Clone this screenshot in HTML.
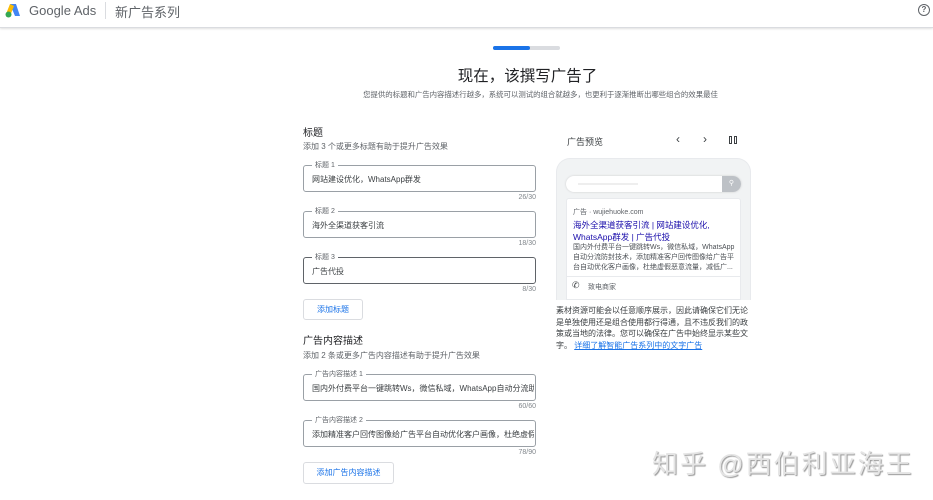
<!DOCTYPE html>
<html><head><meta charset="utf-8"><style>
*{margin:0;padding:0;box-sizing:border-box}
body{width:933px;height:500px;overflow:hidden;background:#fff;font-family:"Liberation Sans","Noto Sans CJK SC",sans-serif;color:#3c4043;position:relative}
.a{position:absolute;white-space:nowrap}
.f{position:absolute;left:303px;width:233px;height:27px;border:1px solid #9aa0a6;border-radius:3px}
.f span.l{position:absolute;top:-6px;left:8px;background:#fff;padding:0 3px;font-size:7px;color:#5f6368}
.f span.v{position:absolute;top:8px;left:8px;font-size:8px;color:#3c4043;white-space:nowrap;overflow:hidden;width:222px}
.c{position:absolute;font-size:7px;color:#80868b;right:397px}
.btn{position:absolute;left:303px;border:1px solid #dadce0;border-radius:3px;color:#1a73e8;font-size:8px;text-align:center}
</style></head><body>
<div class="a" style="left:0;top:0;width:933px;height:28px;border-bottom:1px solid #dadce0;box-shadow:0 1px 2px #e0e0e0"></div>
<svg class="a" style="left:5px;top:3px" width="16" height="15" viewBox="0 0 16 15"><path d="M5 1 L11 1 L15 13 L10 13Z" fill="#4285f4"/><path d="M5 1 L9 3 L5 13 L1 11Z" fill="#fbbc04"/><circle cx="3.5" cy="11.5" r="3" fill="#34a853"/></svg>
<div class="a" style="left:29px;top:3px;font-size:13px;color:#5f6368">Google Ads</div>
<div class="a" style="left:105px;top:2px;width:1px;height:17px;background:#dadce0"></div>
<div class="a" style="left:115px;top:2px;font-size:13px;color:#5f6368">新广告系列</div>
<div class="a" style="left:918px;top:4px;width:12px;height:12px;border:1.5px solid #5f6368;border-radius:50%;font-size:8px;text-align:center;line-height:9px;color:#5f6368;font-weight:bold">?</div>
<div class="a" style="left:493px;top:46px;width:67px;height:4px;background:#dadce0;border-radius:2px"></div>
<div class="a" style="left:493px;top:46px;width:37px;height:4px;background:#1a73e8;border-radius:2px"></div>
<div class="a" style="left:0;width:1055px;text-align:center;top:64px;font-size:15.5px;color:#202124">现在，该撰写广告了</div>
<div class="a" style="left:0;width:1081px;text-align:center;top:89px;font-size:7.4px;color:#5f6368">您提供的标题和广告内容描述行越多，系统可以测试的组合就越多，也更利于逐渐推断出哪些组合的效果最佳</div>
<div class="a" style="left:303px;top:124px;font-size:10px;color:#202124">标题</div>
<div class="a" style="left:303px;top:141px;font-size:8px;color:#5f6368">添加 3 个或更多标题有助于提升广告效果</div>
<div class="f" style="top:165px"><span class="l">标题 1</span><span class="v">网站建设优化，WhatsApp群发</span></div>
<div class="c" style="top:194px">26/30</div>
<div class="f" style="top:211px"><span class="l">标题 2</span><span class="v">海外全渠道获客引流</span></div>
<div class="c" style="top:240px">18/30</div>
<div class="f" style="top:257px;border-color:#5f6368"><span class="l">标题 3</span><span class="v">广告代投</span></div>
<div class="c" style="top:286px">8/30</div>
<div class="btn" style="top:299px;width:60px;height:21px;line-height:19px">添加标题</div>
<div class="a" style="left:303px;top:332px;font-size:10px;color:#202124">广告内容描述</div>
<div class="a" style="left:303px;top:350px;font-size:8px;color:#5f6368">添加 2 条或更多广告内容描述有助于提升广告效果</div>
<div class="f" style="top:374px"><span class="l">广告内容描述 1</span><span class="v">国内外付费平台一键跳转Ws，微信私域，WhatsApp自动分流助手</span></div>
<div class="c" style="top:403px">60/60</div>
<div class="f" style="top:420px"><span class="l">广告内容描述 2</span><span class="v">添加精准客户回传图像给广告平台自动优化客户画像，杜绝虚假</span></div>
<div class="c" style="top:449px">78/90</div>
<div class="btn" style="top:462px;width:91px;height:22px;line-height:20px">添加广告内容描述</div>
<div class="a" style="left:567px;top:135px;font-size:9px;color:#3c4043">广告预览</div>
<div class="a" style="left:676px;top:132px;font-size:12px;color:#3c4043">‹</div>
<div class="a" style="left:703px;top:132px;font-size:12px;color:#3c4043">›</div>
<div class="a" style="left:729px;top:136px;width:3px;height:8px;border:1px solid #3c4043"></div>
<div class="a" style="left:734px;top:136px;width:3px;height:8px;border:1px solid #3c4043"></div>
<div class="a" style="left:556px;top:158px;width:195px;height:142px;background:#f1f3f4;border:1px solid #e8eaed;border-bottom:none;border-radius:14px 14px 0 0"></div>
<div class="a" style="left:566px;top:176px;width:175px;height:16px;background:#fff;border-radius:8px;box-shadow:0 0 2px #ccc"></div>
<div class="a" style="left:578px;top:183px;width:60px;height:2px;background:#eee"></div>
<div class="a" style="left:722px;top:176px;width:19px;height:16px;background:#bdc1c6;border-radius:0 8px 8px 0;color:#fff;font-size:7px;text-align:center;line-height:16px">⚲</div>
<div class="a" style="left:566px;top:198px;width:175px;height:102px;background:#fff;border:1px solid #e8eaed;border-radius:3px 3px 0 0"></div>
<div class="a" style="left:573px;top:207px;font-size:7px;color:#5f6368">广告 · wujiehuoke.com</div>
<div class="a" style="left:573px;top:219px;font-size:8.5px;color:#1a0dab;line-height:12px">海外全渠道获客引流 | 网站建设优化,<br>WhatsApp群发 | 广告代投</div>
<div class="a" style="left:573px;top:243px;font-size:7px;color:#4d5156;line-height:10px">国内外付费平台一键跳转Ws，微信私域，WhatsApp<br>自动分流防封技术，添加精准客户回传图像给广告平<br>台自动优化客户画像，杜绝虚假恶意流量，减低广...</div>
<div class="a" style="left:566px;top:276px;width:175px;height:1px;background:#e8eaed"></div>
<div class="a" style="left:572px;top:280px;font-size:9px;color:#3c4043">✆</div>
<div class="a" style="left:588px;top:282px;font-size:7px;color:#5f6368">致电商家</div>
<div class="a" style="left:556px;top:305px;font-size:8px;color:#3c4043;line-height:11.5px">素材资源可能会以任意顺序展示，因此请确保它们无论<br>是单独使用还是组合使用都行得通，且不违反我们的政<br>策或当地的法律。您可以确保在广告中始终显示某些文<br>字。 <span style="color:#1a73e8;text-decoration:underline">详细了解智能广告系列中的文字广告</span></div>
<div class="a" style="left:652px;top:444px;font-size:26px;color:#e4e4e4;text-shadow:1px 1px 1px #999;letter-spacing:2px">知乎 @西伯利亚海王</div>
</body></html>
